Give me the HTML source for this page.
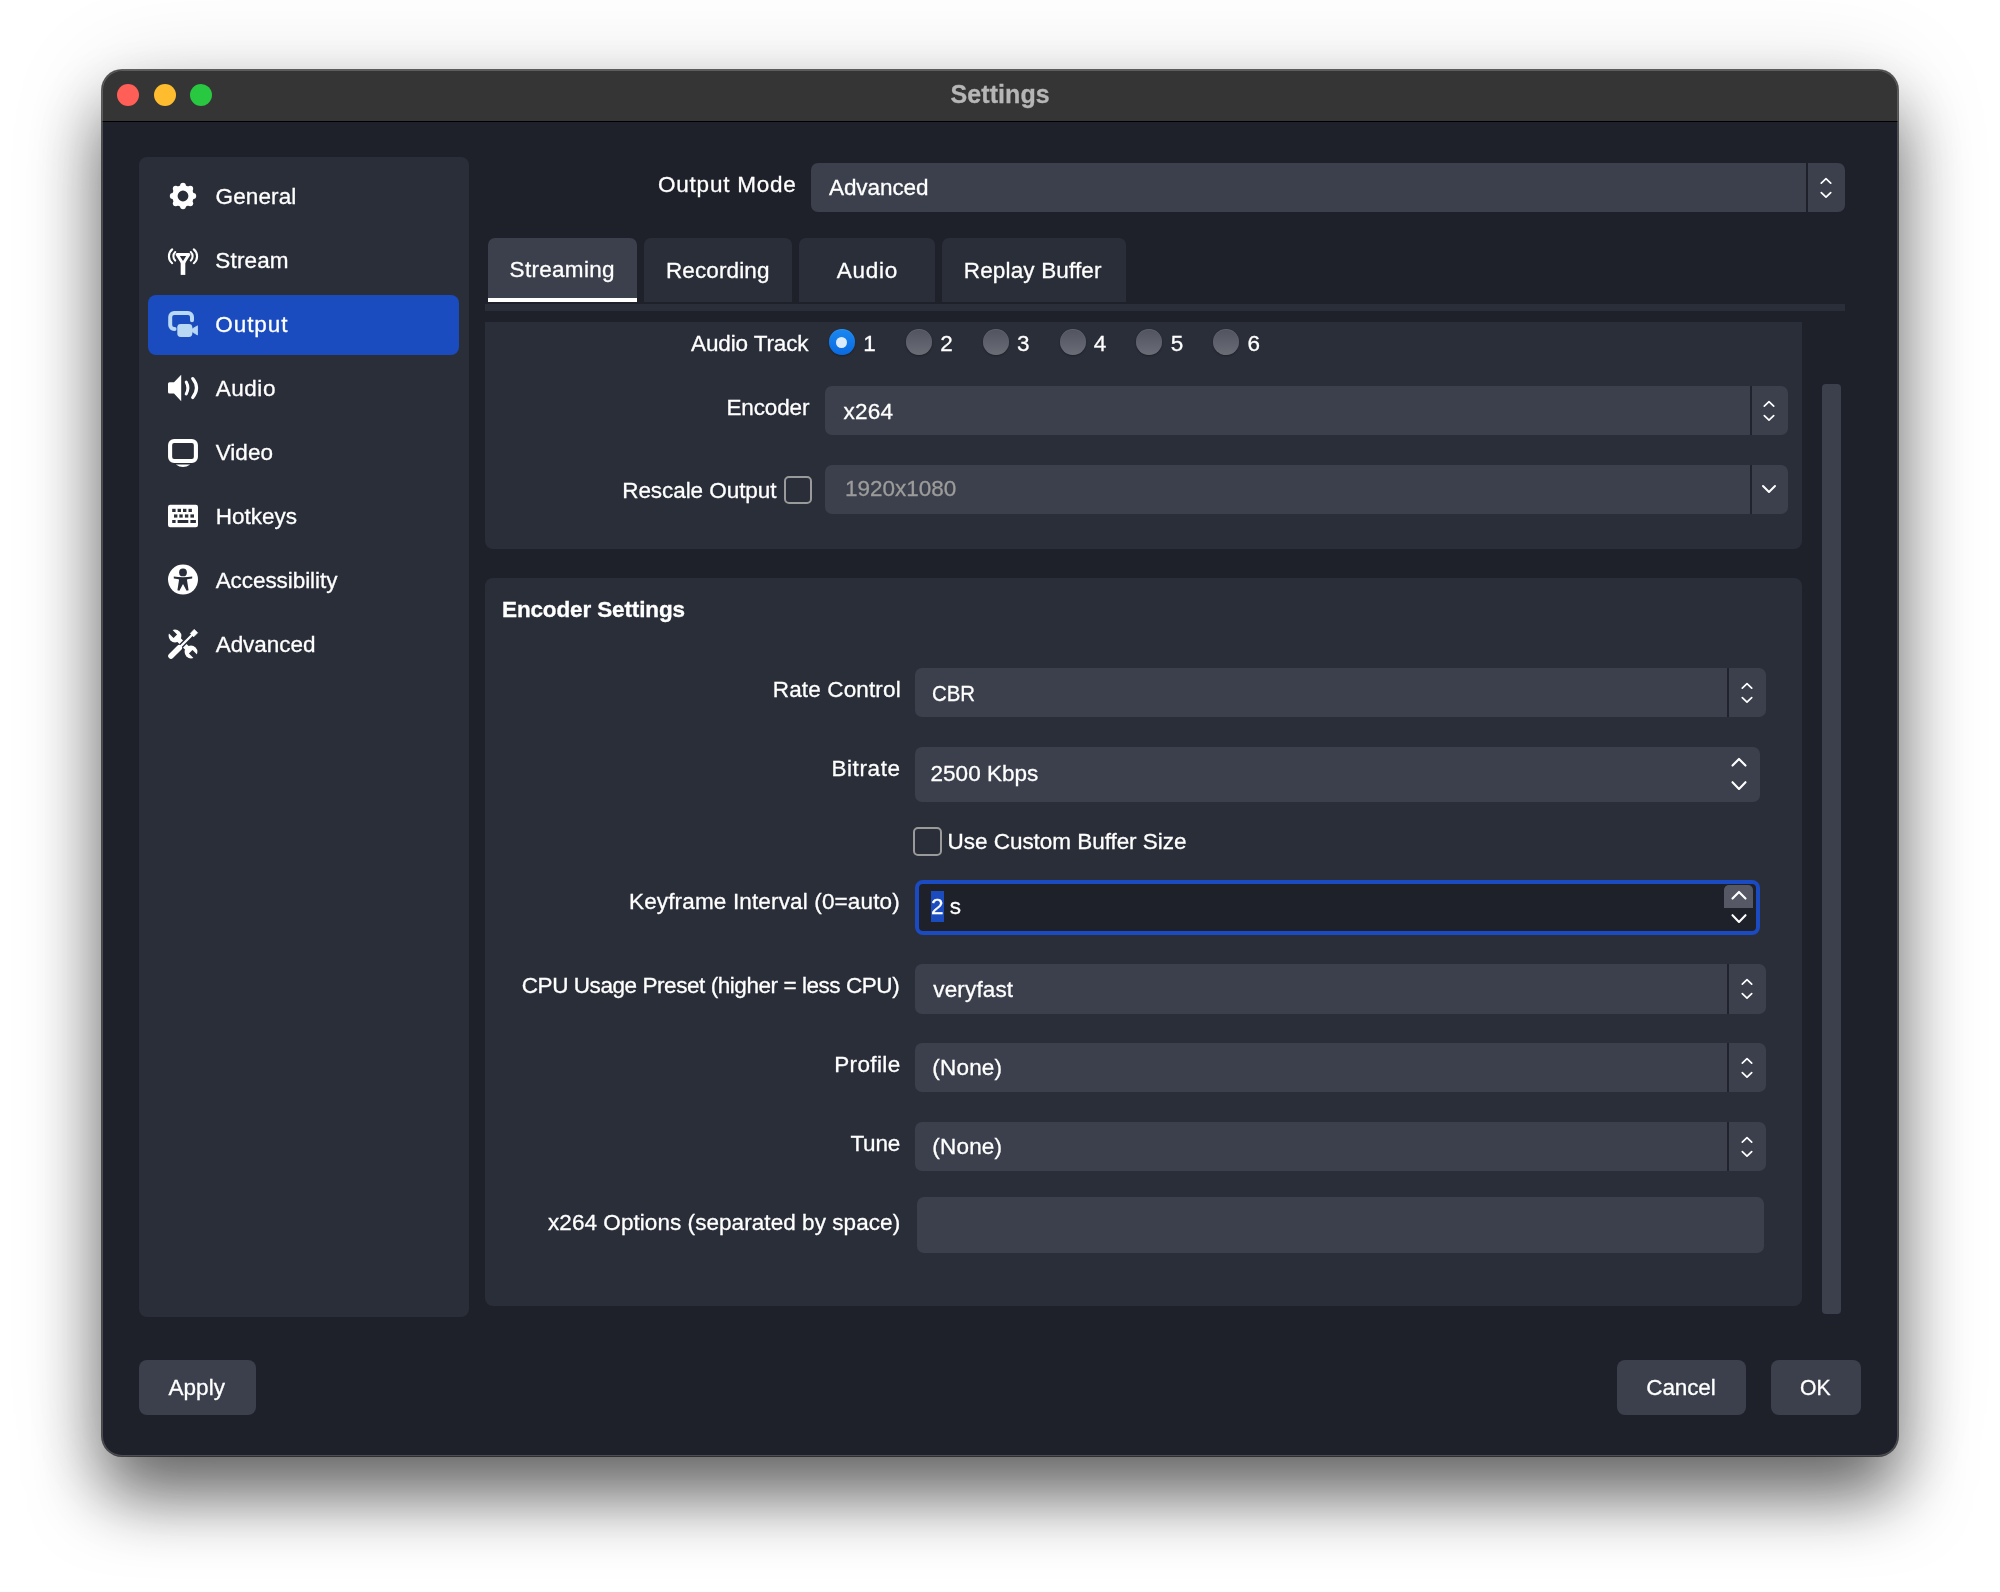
<!DOCTYPE html>
<html lang="en">
<head>
<meta charset="utf-8">
<title>Settings</title>
<style>
html,body{margin:0;padding:0}
body{width:2000px;height:1592px;background:#fff;position:relative;overflow:hidden;font-family:"Liberation Sans",sans-serif;font-size:22.5px;color:#fff;line-height:30px;-webkit-text-stroke:.3px}
.a{position:absolute;white-space:nowrap}
#win{left:102px;top:69.7px;width:1796px;height:1386.3px;border-radius:20px;background:#1f212a;box-shadow:0 0 0 1px rgba(0,0,0,.6),0 41px 68px rgba(0,0,0,.57),0 6px 100px rgba(0,0,0,.13)}
#tbar{left:102px;top:69.7px;width:1796px;height:51.3px;border-radius:20px 20px 0 0;background:#353535}
#tline{left:102px;top:120.5px;width:1796px;height:1.3px;background:#000}
.tl{width:22px;height:22px;border-radius:50%;top:84px}
.panel{background:#2a2e39;border-radius:8px}
.inp{background:#3c404d;border-radius:7px}
.sep{width:2px;background:#1f212a}
.sepg{width:2px;background:#20232c}
.lbl{text-align:right;width:500px}
.nav{left:216px}
.btn{background:#3c404d;border-radius:8px;text-align:center;height:55px;line-height:55px;top:1360px}
.cb{width:24px;height:24px;border:2px solid #9a9a9a;border-radius:5px}
.rad{width:25.6px;height:25.6px;border-radius:50%;top:329.3px;background:linear-gradient(#51545f,#6a6c76);box-shadow:0 1px 2px rgba(0,0,0,.3),inset 0 1px 0 rgba(255,255,255,.08)}
svg{position:absolute;overflow:visible}
</style>
</head>
<body>
<div id="root" style="position:absolute;left:0;top:0;width:2000px;height:1592px;will-change:transform">
<div class="a" id="win"></div>
<div class="a" id="tbar"></div>
<div class="a" id="tline"></div>
<div class="a tl" style="left:117px;background:#ff5f57"></div>
<div class="a tl" style="left:153.7px;background:#febc2e"></div>
<div class="a tl" style="left:190.2px;background:#28c840"></div>

<div class="a" style="left:102px;top:69.7px;width:1796px;height:1386.3px;border-radius:20px;box-shadow:inset 0 0 0 1px rgba(255,255,255,.2);z-index:5"></div>
<!-- sidebar -->
<div class="a panel" style="left:139px;top:157px;width:329.6px;height:1160px"></div>
<div class="a" style="left:148px;top:295px;width:311px;height:60px;border-radius:8px;background:#1a4bbf"></div>
<!-- gear -->
<svg style="left:167px;top:179.7px" width="32" height="32" viewBox="-16 -16 32 32"><circle r="8.1" fill="none" stroke="#fff" stroke-width="5.4"/><g fill="#fff"><circle cx="0.00" cy="-10.30" r="2.9"/><circle cx="7.28" cy="-7.28" r="2.9"/><circle cx="10.30" cy="-0.00" r="2.9"/><circle cx="7.28" cy="7.28" r="2.9"/><circle cx="0.00" cy="10.30" r="2.9"/><circle cx="-7.28" cy="7.28" r="2.9"/><circle cx="-10.30" cy="0.00" r="2.9"/><circle cx="-7.28" cy="-7.28" r="2.9"/></g></svg>
<!-- stream antenna -->
<svg style="left:167px;top:246px" width="32" height="32" viewBox="-16 -16 32 32"><g fill="none" stroke="#fff" stroke-linecap="round" stroke-linejoin="round"><path d="M-5.9 -7.5H5.9L0 1.7Z" stroke-width="3"/><path d="M-10.8 -12.6A8.9 8.9 0 0 0 -10.8 1.2M10.8 -12.6A8.9 8.9 0 0 1 10.8 1.2" stroke-width="2.1"/><path d="M-7.8 -10A6 6 0 0 0 -7.8 -1.4M7.8 -10A6 6 0 0 1 7.8 -1.4" stroke-width="2.1"/></g><rect x="-2.3" y="0" width="4.6" height="12.9" fill="#fff"/></svg>
<!-- output -->
<svg style="left:167px;top:308px" width="32" height="32" viewBox="167 308 32 32"><path d="M192 320.2V317A4 4 0 0 0 188 313H174.2A4 4 0 0 0 170.2 317V325A4 4 0 0 0 174.2 329H174.6" fill="none" stroke="#b9d8f3" stroke-width="4" stroke-linecap="round"/><rect x="177.3" y="323.9" width="15" height="13" rx="3.4" fill="#b9d8f3"/><path d="M191.8 329.2L197.5 325.8V335L191.8 331.6Z" fill="#b9d8f3" stroke="#b9d8f3" stroke-width="0.8" stroke-linejoin="round"/></svg>
<!-- audio -->
<svg style="left:167px;top:372px" width="32" height="32" viewBox="167 372 32 32"><path d="M168 383.8Q168 382.3 169.5 382.3H174L181.2 374.8V401.2L174 393.4H169.5Q168 393.4 168 391.9Z" fill="#fff"/><path d="M186.2 382Q189.6 388 186.2 394" fill="none" stroke="#fff" stroke-width="3" stroke-linecap="round"/><path d="M192.7 378.6Q200.3 388 192.7 397.5" fill="none" stroke="#fff" stroke-width="3.2" stroke-linecap="round"/></svg>
<!-- video -->
<svg style="left:167px;top:436px" width="32" height="32" viewBox="167 436 32 32"><rect x="170.1" y="441" width="25.8" height="20" rx="4" fill="none" stroke="#fff" stroke-width="4.1"/><path d="M175.8 464.6H190.2Q183 469.6 175.8 464.6Z" fill="#fff"/></svg>
<!-- hotkeys -->
<svg style="left:167px;top:500px" width="32" height="32" viewBox="167 500 32 32"><rect x="168" y="504.8" width="30" height="22.4" rx="2.2" fill="#fff"/><g fill="#2a2e39"><rect x="172.2" y="508.8" width="3.4" height="3.2"/><rect x="177.6" y="508.8" width="3.4" height="3.2"/><rect x="183" y="508.8" width="3.4" height="3.2"/><rect x="188.5" y="508.8" width="3.4" height="3.2"/><rect x="174" y="514.4" width="3.4" height="3.2"/><rect x="179.3" y="514.4" width="3.4" height="3.2"/><rect x="184.9" y="514.4" width="3.4" height="3.2"/><rect x="190.4" y="514.4" width="3.6" height="3.2"/><rect x="172.2" y="520" width="3.4" height="3"/><rect x="177.6" y="520" width="10.7" height="3"/><rect x="190.4" y="520" width="5.5" height="3"/></g></svg>
<!-- accessibility -->
<svg style="left:167px;top:564px" width="32" height="32" viewBox="167 564 32 32"><circle cx="183" cy="579.6" r="15" fill="#fff"/><g fill="#2a2e39"><circle cx="183" cy="572.4" r="3.9"/><path d="M173.8 576.4Q183 578 192.2 576.4V578.6Q188 579.3 186.9 579.4L188.6 590.3L186.6 590.8L183 584L179.4 590.8L177.4 590.3L179.1 579.4Q178 579.3 173.8 578.6Z"/></g></svg>
<!-- advanced -->
<svg style="left:167px;top:628px" width="32" height="32" viewBox="167 628 32 32"><path d="M176 637L190 651" stroke="#fff" stroke-width="5.2" fill="none"/><circle cx="175" cy="636" r="6.4" fill="#fff"/><circle cx="191" cy="652" r="6.4" fill="#fff"/><path d="M175.3 636.3L168 629" stroke="#2a2e39" stroke-width="5" fill="none"/><path d="M190.7 651.7L199 660" stroke="#2a2e39" stroke-width="5" fill="none"/><path d="M172 655L193 634" stroke="#2a2e39" stroke-width="5.2" fill="none"/><path d="M171 656L179.3 647.7" stroke="#fff" stroke-width="5.6" stroke-linecap="round" fill="none"/><path d="M179 648L193 634" stroke="#fff" stroke-width="2.3" fill="none"/><path d="M190.4 633.4L194.2 629.4L197.6 632.8L193.6 636.8Z" fill="#fff" stroke="#fff" stroke-width="0.8" stroke-linejoin="round"/></svg>


<!-- output mode -->
<div class="a inp" style="left:811px;top:163px;width:1034px;height:49px"></div>
<div class="a sep" style="left:1806px;top:163px;height:49px"></div>
<svg style="left:1818px;top:173px" width="16" height="30" viewBox="0 0 16 30"><path d="M3.3 10.2L8 5.7L12.7 10.2M3.3 19.6L8 24.1L12.7 19.6" fill="none" stroke="#fff" stroke-width="1.7" stroke-linecap="round" stroke-linejoin="round"/></svg>

<!-- tabs -->
<div class="a" style="left:488px;top:238px;width:149px;height:64px;border-radius:7px 7px 0 0;background:#3c404d"></div>
<div class="a" style="left:488px;top:298px;width:149px;height:4px;background:#fff"></div>
<div class="a" style="left:644px;top:238px;width:148px;height:64px;border-radius:7px 7px 0 0;background:#2a2e39"></div>
<div class="a" style="left:799px;top:238px;width:136px;height:64px;border-radius:7px 7px 0 0;background:#2a2e39"></div>
<div class="a" style="left:942px;top:238px;width:184px;height:64px;border-radius:7px 7px 0 0;background:#2a2e39"></div>
<div class="a" style="left:485px;top:304px;width:1360px;height:7px;background:#2a2e39"></div>

<!-- group 1 -->
<div class="a panel" style="left:485px;top:322px;width:1317px;height:227px;border-radius:0 0 8px 8px"></div>
<div class="a rad" style="left:829px;background:linear-gradient(#1a88f1,#0a6ae1)"></div>
<div class="a" style="left:836.1px;top:336.5px;width:11.4px;height:11.4px;border-radius:50%;background:#dcebfb"></div>
<div class="a rad" style="left:906px"></div>
<div class="a rad" style="left:983px"></div>
<div class="a rad" style="left:1060px"></div>
<div class="a rad" style="left:1136px"></div>
<div class="a rad" style="left:1213px"></div>

<div class="a inp" style="left:825px;top:386px;width:963px;height:49px"></div>
<div class="a sepg" style="left:1750px;top:386px;height:49px"></div>
<svg style="left:1761px;top:396px" width="16" height="30" viewBox="0 0 16 30"><path d="M3.3 10.2L8 5.7L12.7 10.2M3.3 19.6L8 24.1L12.7 19.6" fill="none" stroke="#fff" stroke-width="1.7" stroke-linecap="round" stroke-linejoin="round"/></svg>

<div class="a cb" style="left:784px;top:476px"></div>
<div class="a inp" style="left:825px;top:465px;width:963px;height:49px"></div>
<div class="a sepg" style="left:1750px;top:465px;height:49px"></div>
<svg style="left:1761px;top:481px" width="16" height="16" viewBox="0 0 16 16"><path d="M2 5L8 11L14 5" fill="none" stroke="#fff" stroke-width="2" stroke-linecap="round" stroke-linejoin="round"/></svg>

<!-- group 2 -->
<div class="a panel" style="left:485px;top:578px;width:1317px;height:728px"></div>

<div class="a inp" style="left:915px;top:668px;width:851px;height:49px"></div>
<div class="a sepg" style="left:1727px;top:668px;height:49px"></div>
<svg style="left:1739px;top:678px" width="16" height="30" viewBox="0 0 16 30"><path d="M3.3 10.2L8 5.7L12.7 10.2M3.3 19.6L8 24.1L12.7 19.6" fill="none" stroke="#fff" stroke-width="1.7" stroke-linecap="round" stroke-linejoin="round"/></svg>

<div class="a inp" style="left:915px;top:747px;width:845px;height:55px"></div>
<svg style="left:1729px;top:752px" width="20" height="44" viewBox="0 0 20 44"><path d="M3.5 13.6L10 6.9L16.5 13.6M3.5 30.2L10 36.9L16.5 30.2" fill="none" stroke="#fff" stroke-width="2.1" stroke-linecap="round" stroke-linejoin="round"/></svg>

<div class="a cb" style="left:913px;top:827px;width:25px;height:25px"></div>

<div class="a" style="left:915px;top:880px;width:837px;height:47px;border:4px solid #1b4bc3;border-radius:8px;background:#1f212a"></div>
<div class="a" style="left:931px;top:891px;width:13px;height:31px;background:#1a4bbf"></div>
<div class="a" style="left:1724px;top:885px;width:29px;height:23px;border-radius:5px 5px 0 0;background:#565965"></div>
<svg style="left:1729px;top:885px" width="20" height="44" viewBox="0 0 20 44"><path d="M3.5 13.6L10 6.9L16.5 13.6M3.5 30.2L10 36.9L16.5 30.2" fill="none" stroke="#fff" stroke-width="2.1" stroke-linecap="round" stroke-linejoin="round"/></svg>

<div class="a inp" style="left:915px;top:964px;width:851px;height:50px"></div>
<div class="a sepg" style="left:1727px;top:964px;height:50px"></div>
<svg style="left:1739px;top:974px" width="16" height="30" viewBox="0 0 16 30"><path d="M3.3 10.2L8 5.7L12.7 10.2M3.3 19.6L8 24.1L12.7 19.6" fill="none" stroke="#fff" stroke-width="1.7" stroke-linecap="round" stroke-linejoin="round"/></svg>

<div class="a inp" style="left:915px;top:1043px;width:851px;height:49px"></div>
<div class="a sepg" style="left:1727px;top:1043px;height:49px"></div>
<svg style="left:1739px;top:1053px" width="16" height="30" viewBox="0 0 16 30"><path d="M3.3 10.2L8 5.7L12.7 10.2M3.3 19.6L8 24.1L12.7 19.6" fill="none" stroke="#fff" stroke-width="1.7" stroke-linecap="round" stroke-linejoin="round"/></svg>

<div class="a inp" style="left:915px;top:1122px;width:851px;height:49px"></div>
<div class="a sepg" style="left:1727px;top:1122px;height:49px"></div>
<svg style="left:1739px;top:1132px" width="16" height="30" viewBox="0 0 16 30"><path d="M3.3 10.2L8 5.7L12.7 10.2M3.3 19.6L8 24.1L12.7 19.6" fill="none" stroke="#fff" stroke-width="1.7" stroke-linecap="round" stroke-linejoin="round"/></svg>

<div class="a inp" style="left:917px;top:1197px;width:847px;height:56px"></div>

<!-- scrollbar -->
<div class="a" style="left:1822px;top:384px;width:19px;height:930px;border-radius:4px;background:#3c404d"></div>

<!-- buttons -->
<div class="a btn" style="left:139px;width:117px"></div>
<div class="a btn" style="left:1617px;width:129px"></div>
<div class="a btn" style="left:1771px;width:90px"></div>

<!-- texts -->
<div class="a" style="left:950.5px;top:79px;letter-spacing:0.08px;font-weight:bold;font-size:25px;color:#b6b6b6">Settings</div>
<div class="a" style="left:215.5px;top:182px;letter-spacing:0.13px">General</div>
<div class="a" style="left:215.3px;top:246px;letter-spacing:0.16px">Stream</div>
<div class="a" style="left:215.3px;top:310px;letter-spacing:0.92px">Output</div>
<div class="a" style="left:215.7px;top:374px;letter-spacing:0.54px">Audio</div>
<div class="a" style="left:215.7px;top:438px;letter-spacing:0.04px">Video</div>
<div class="a" style="left:215.8px;top:502px">Hotkeys</div>
<div class="a" style="left:215.7px;top:566px;letter-spacing:-0.07px">Accessibility</div>
<div class="a" style="left:215.7px;top:630px;letter-spacing:-0.05px">Advanced</div>
<div class="a" style="left:658px;top:170px;letter-spacing:0.78px">Output Mode</div>
<div class="a" style="left:829px;top:173px;letter-spacing:-0.08px">Advanced</div>
<div class="a" style="left:509.6px;top:255px;letter-spacing:0.3px">Streaming</div>
<div class="a" style="left:666px;top:256px;letter-spacing:0.12px">Recording</div>
<div class="a" style="left:836.8px;top:256px;letter-spacing:0.74px">Audio</div>
<div class="a" style="left:963.8px;top:256px;letter-spacing:0.15px">Replay Buffer</div>
<div class="a" style="left:691px;top:329px;letter-spacing:-0.12px">Audio Track</div>
<div class="a" style="left:726.4px;top:393px;letter-spacing:-0.12px">Encoder</div>
<div class="a" style="left:843.6px;top:397px;letter-spacing:0.17px">x264</div>
<div class="a" style="left:622.2px;top:476px;letter-spacing:-0.06px">Rescale Output</div>
<div class="a" style="left:845px;top:474px;color:#9c9c9a">1920x1080</div>
<div class="a" style="left:502px;top:595px;letter-spacing:-0.13px;font-weight:bold">Encoder Settings</div>
<div class="a" style="left:772.8px;top:675px;letter-spacing:0.14px">Rate Control</div>
<div class="a" style="left:932px;top:679px;transform:scaleX(.907);transform-origin:0 0">CBR</div>
<div class="a" style="left:831.4px;top:754px;letter-spacing:0.61px">Bitrate</div>
<div class="a" style="left:930.6px;top:759px">2500 Kbps</div>
<div class="a" style="left:947.6px;top:827px;letter-spacing:-0.04px">Use Custom Buffer Size</div>
<div class="a" style="left:629px;top:887px;letter-spacing:0.15px">Keyframe Interval (0=auto)</div>
<div class="a" style="left:521.8px;top:971px;letter-spacing:-0.44px">CPU Usage Preset (higher = less CPU)</div>
<div class="a" style="left:933.3px;top:975px;letter-spacing:0.15px">veryfast</div>
<div class="a" style="left:834.2px;top:1050px;letter-spacing:0.37px">Profile</div>
<div class="a" style="left:932.3px;top:1053px;letter-spacing:0.2px">(None)</div>
<div class="a" style="left:850.4px;top:1129px;letter-spacing:-0.21px">Tune</div>
<div class="a" style="left:932.3px;top:1132px;letter-spacing:0.2px">(None)</div>
<div class="a" style="left:548px;top:1208px;letter-spacing:0.06px">x264 Options (separated by space)</div>
<div class="a" style="left:168.6px;top:1373px">Apply</div>
<div class="a" style="left:1646.3px;top:1373px;letter-spacing:-0.13px">Cancel</div>
<div class="a" style="left:1800px;top:1373px;transform:scaleX(.94);transform-origin:0 0">OK</div>
<div class="a" style="left:863.3px;top:329px">1</div>
<div class="a" style="left:940.15px;top:329px">2</div>
<div class="a" style="left:1017px;top:329px">3</div>
<div class="a" style="left:1093.85px;top:329px">4</div>
<div class="a" style="left:1170.7px;top:329px">5</div>
<div class="a" style="left:1247.55px;top:329px">6</div>
<div class="a" style="left:931px;top:892px">2 s</div>
</div>
</body>
</html>
